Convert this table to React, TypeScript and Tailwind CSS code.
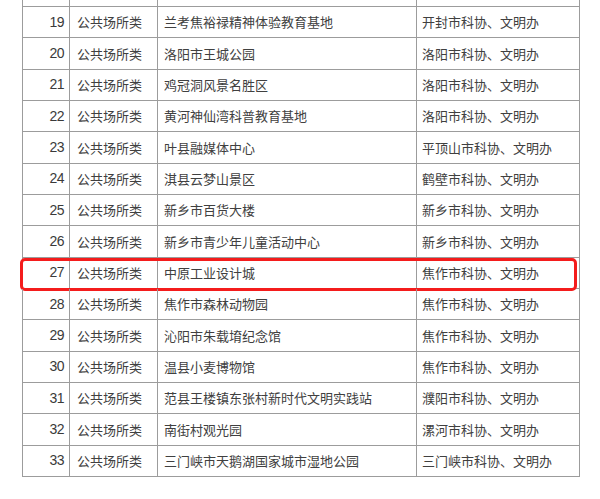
const rows: [number, string, string][] = [
  [19, "兰考焦裕禄精神体验教育基地", "开封市科协、文明办"],
  [20, "洛阳市王城公园", "洛阳市科协、文明办"],
  [21, "鸡冠洞风景名胜区", "洛阳市科协、文明办"],
  [22, "黄河神仙湾科普教育基地", "洛阳市科协、文明办"],
  [23, "叶县融媒体中心", "平顶山市科协、文明办"],
  [24, "淇县云梦山景区", "鹤壁市科协、文明办"],
  [25, "新乡市百货大楼", "新乡市科协、文明办"],
  [26, "新乡市青少年儿童活动中心", "新乡市科协、文明办"],
  [27, "中原工业设计城", "焦作市科协、文明办"],
  [28, "焦作市森林动物园", "焦作市科协、文明办"],
  [29, "沁阳市朱载堉纪念馆", "焦作市科协、文明办"],
  [30, "温县小麦博物馆", "焦作市科协、文明办"],
  [31, "范县王楼镇东张村新时代文明实践站", "濮阳市科协、文明办"],
  [32, "南街村观光园", "漯河市科协、文明办"],
  [33, "三门峡市天鹅湖国家城市湿地公园", "三门峡市科协、文明办"],
];

const cell = "border-r border-b border-[#9c9c9c] flex items-center";

export default function App() {
  return (
    <div
      className="w-[600px] h-[499px] bg-white overflow-hidden text-[13px] text-[#404040]"
      style={{ fontFamily: '"Noto Sans CJK SC", "Liberation Sans", sans-serif' }}
    >
      <div className="ml-[22px] w-[558px]">
        {/* partial row cut off at the top */}
        <div className="flex h-[7px]">
          <div className={`${cell} border-l w-[48px]`} />
          <div className={`${cell} w-[88px]`} />
          <div className={`${cell} w-[259px]`} />
          <div className={`${cell} w-[163px]`} />
        </div>

        {rows.map(([n, name, org]) => (
          <div key={n} className="relative flex h-[31.33px]">
            <div className={`${cell} border-l w-[48px] justify-end pr-[5px] font-['Liberation_Sans'] text-[14px] tracking-[-0.5px] text-[#3a3a3a]`}>
              {n}
            </div>
            <div className={`${cell} w-[88px] pl-[7px]`}>公共场所类</div>
            <div className={`${cell} w-[259px] pl-[6px]`}>{name}</div>
            <div className={`${cell} w-[163px] pl-[5px]`}>{org}</div>
            {n === 27 && (
              <div className="absolute left-[-2px] top-[0px] w-[557px] h-[33px] border-[3px] border-[#f41c1c] rounded-[5px]" />
            )}
          </div>
        ))}
      </div>
    </div>
  );
}
